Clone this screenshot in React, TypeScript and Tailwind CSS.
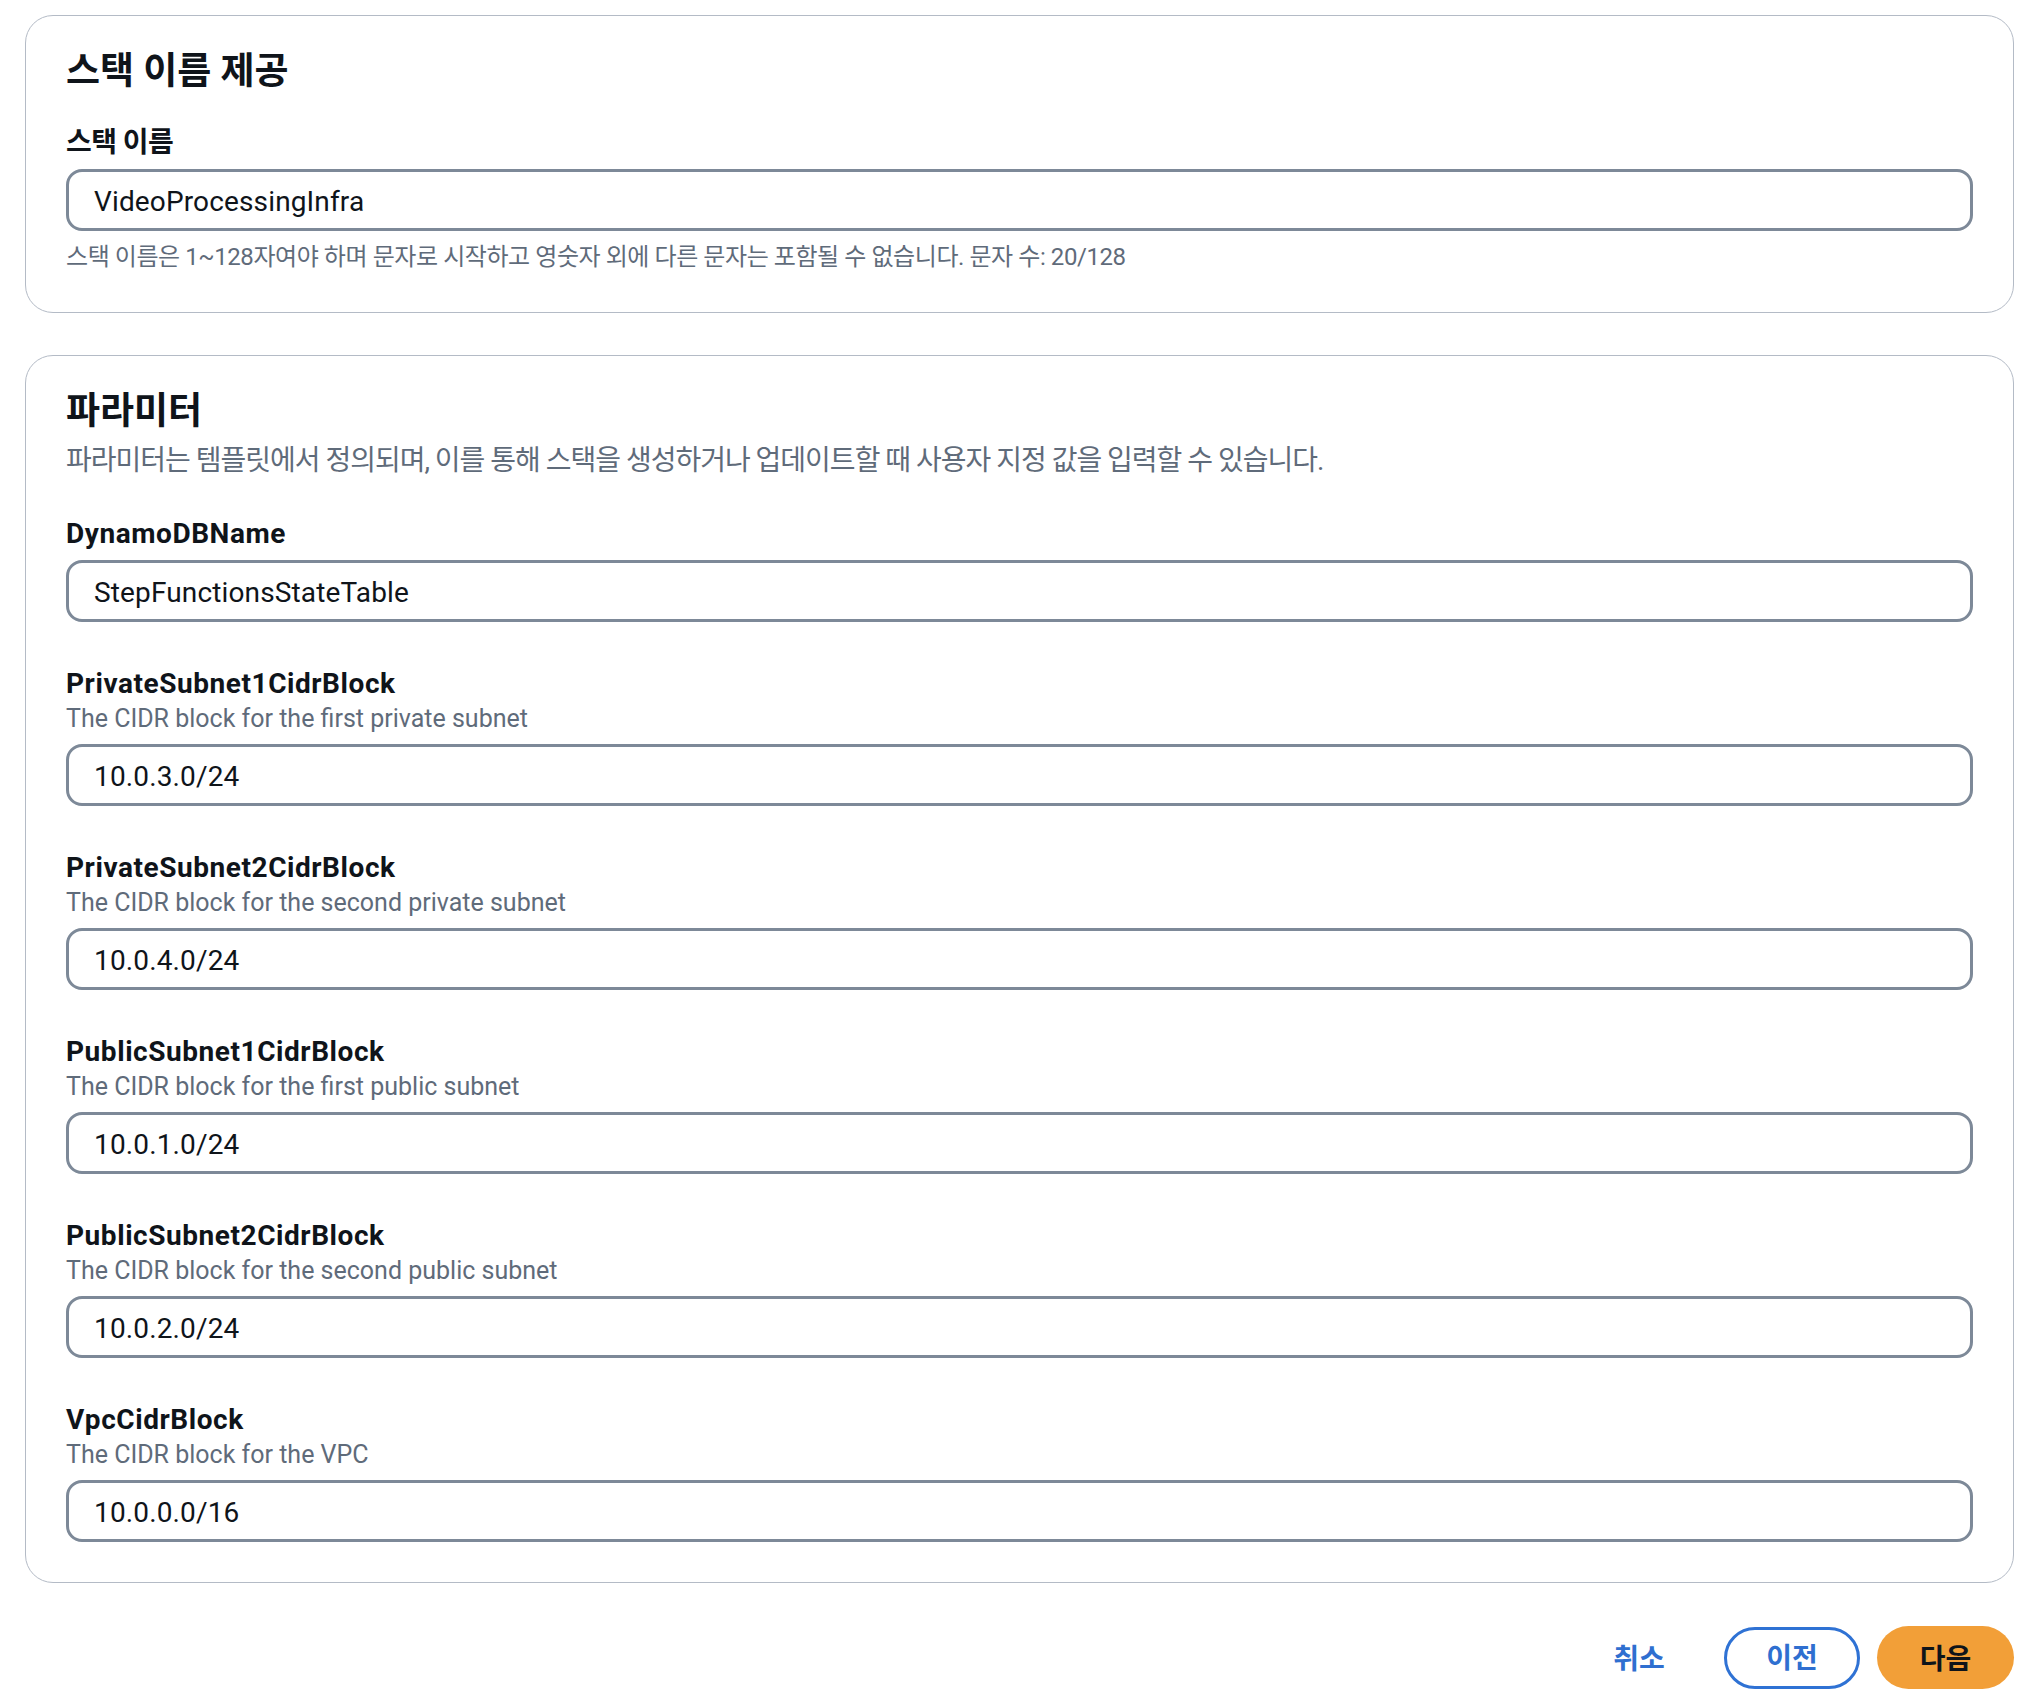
import React from "react";

const fields = [
  { name: "DynamoDBName", value: "StepFunctionsStateTable" },
  {
    name: "PrivateSubnet1CidrBlock",
    desc: "The CIDR block for the first private subnet",
    value: "10.0.3.0/24",
  },
  {
    name: "PrivateSubnet2CidrBlock",
    desc: "The CIDR block for the second private subnet",
    value: "10.0.4.0/24",
  },
  {
    name: "PublicSubnet1CidrBlock",
    desc: "The CIDR block for the first public subnet",
    value: "10.0.1.0/24",
  },
  {
    name: "PublicSubnet2CidrBlock",
    desc: "The CIDR block for the second public subnet",
    value: "10.0.2.0/24",
  },
  { name: "VpcCidrBlock", desc: "The CIDR block for the VPC", value: "10.0.0.0/16" },
];

function TextInput({ value }: { value: string }) {
  return (
    <div className="mt-2 flex h-[62px] items-center rounded-[16px] border-[3px] border-[#7d8998] bg-white pl-[25px] pt-[3px] text-[28px] tracking-[0.005em] text-[#0f141a]">
      {value}
    </div>
  );
}

export default function App() {
  return (
    <div className="min-h-screen bg-white pl-[25px] pr-[20px] pt-[15px] font-[Roboto,'Noto_Sans_CJK_KR',sans-serif] text-[#0f141a]">
      <div className="flex flex-col gap-[42px]">
        {/* Stack name */}
        <section className="rounded-[28px] border border-[#b4bbc6] px-[40px] pb-[39px] pt-[34px]">
          <h2 className="text-[37px] font-bold leading-[44px]">스택 이름 제공</h2>
          <label className="mt-[31px] block text-[28px] font-bold leading-[36px] tracking-[-0.02em]">스택 이름</label>
          <TextInput value="VideoProcessingInfra" />
          <p className="mt-[10px] text-[24px] leading-[32px] tracking-[-0.018em] text-[#5f6b7a]">
            스택 이름은 1~128자여야 하며 문자로 시작하고 영숫자 외에 다른 문자는 포함될 수 없습니다. 문자 수: 20/128
          </p>
        </section>

        {/* Parameters */}
        <section className="rounded-[28px] border border-[#b4bbc6] px-[40px] pb-[40px] pt-[34px]">
          <h2 className="text-[37px] font-bold leading-[44px]">파라미터</h2>
          <p className="mt-[10px] text-[28px] leading-[34px] tracking-[-0.036em] text-[#5f6b7a]">
            파라미터는 템플릿에서 정의되며, 이를 통해 스택을 생성하거나 업데이트할 때 사용자 지정 값을 입력할 수 있습니다.
          </p>
          <div className="mt-[38px] flex flex-col gap-[44px]">
            {fields.map((f) => (
              <div key={f.name}>
                <div className="text-[28px] font-bold leading-[36px] tracking-[0.02em]">{f.name}</div>
                {f.desc && (
                  <div className="text-[25px] leading-[34px] text-[#5f6b7a]">{f.desc}</div>
                )}
                <TextInput value={f.value} />
              </div>
            ))}
          </div>
        </section>
      </div>

      {/* Footer actions */}
      <div className="mt-[43px] flex items-center justify-end gap-[17px] pb-4">
        <button className="h-[62px] w-[136px] rounded-full pt-[4px] text-[28px] font-bold text-[#2f6fd0]">취소</button>
        <button className="h-[62px] w-[136px] rounded-full border-[3px] border-[#2f72d4] bg-white pt-[3px] text-[28px] font-bold text-[#2f6fd0]">
          이전
        </button>
        <button className="h-[63px] w-[137px] rounded-full bg-[#f29f38] pt-[4px] text-[28px] font-bold text-[#0f141a]">다음</button>
      </div>
    </div>
  );
}
